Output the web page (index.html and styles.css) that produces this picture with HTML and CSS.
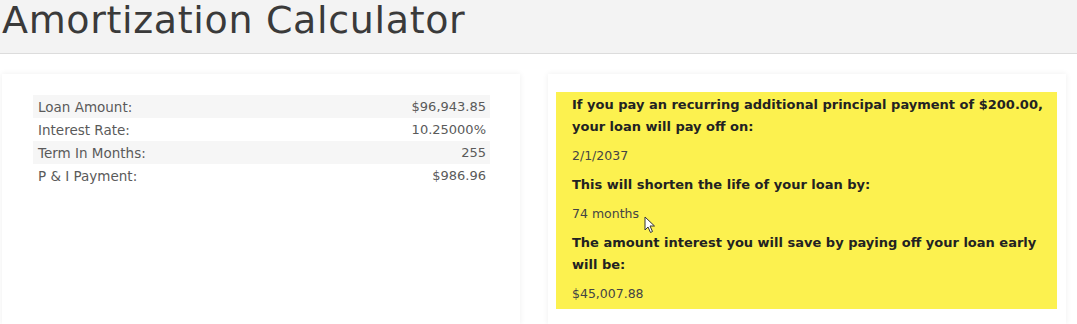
FILE: index.html
```html
<!DOCTYPE html>
<html lang="en">
<head>
    <meta charset="UTF-8">
    <meta name="viewport" content="width=device-width, initial-scale=1.0">
    <title>Amortization Calculator</title>
    <link rel="stylesheet" href="styles.css">
</head>
<body>

    <div class="header">
        <h1>Amortization Calculator</h1>
    </div>

    <div class="main">
        <div class="card">
            <div class="summary">
                <div class="row"><span>Loan Amount:</span><span class="num">$96,943.85</span></div>
                <div class="row"><span>Interest Rate:</span><span class="num">10.25000%</span></div>
                <div class="row"><span>Term In Months:</span><span class="num">255</span></div>
                <div class="row"><span>P &amp; I Payment:</span><span class="num">$986.96</span></div>
            </div>
        </div>

        <div class="card card-right">
            <div class="highlight">
                <p class="label">If you pay an recurring additional principal payment of $200.00, your loan will pay off on:</p>
                <p class="value">2/1/2037</p>
                <p class="label">This will shorten the life of your loan by:</p>
                <p class="value">74 months</p>
                <p class="label">The amount interest you will save by paying off your loan early will be:</p>
                <p class="value">$45,007.88</p>

                <!-- mouse pointer in the capture -->
                <svg class="pointer" width="12" height="18" viewBox="0 0 12 18">
                    <path d="M1 1 L1 14 L4 11 L6.5 16.5 L8.5 15.5 L6 10 L10.5 10 Z" fill="#fff" stroke="#333" stroke-width="1"/>
                </svg>
            </div>
        </div>
    </div>

</body>
</html>
```

FILE: styles.css
```css
body { margin: 0; padding: 0; background: #fff; font-family: "DejaVu Sans", "Liberation Sans", sans-serif; }

.header { height: 53px; background: #f3f3f3; border-bottom: 1px solid #dcdcdc; padding-left: 2px; }
.header h1 { margin: 0; font-size: 38px; font-weight: normal; color: #3a3a3a; line-height: 40px; letter-spacing: 0.65px; }

.main { display: grid; grid-template-columns: 518px 518px; gap: 28px; padding: 20px 11px 0 2px; }

.card { background: #fff; box-shadow: 0 0 6px rgba(0,0,0,0.07); height: 250px; box-sizing: border-box; }

.summary { padding: 21px 30px 0 31px; }
.row { display: flex; justify-content: space-between; align-items: center; height: 23px; padding: 0 4px 0 5px; font-size: 13.5px; color: #5a5a5a; }
.row .num { font-size: 13px; }
.row:nth-child(odd) { background: #f6f6f6; }

.card-right { padding: 18px 9px 0 8px; }
.highlight { position: relative; background: #fcf14f; padding: 2px 14px 4px 16px; }
.highlight p { margin: 0 0 7px; line-height: 22px; color: #222; }
.highlight p:last-of-type { margin-bottom: 0; }
.label { font-size: 13px; font-weight: bold; }
.value { font-size: 12.5px; color: #444 !important; }

.pointer { position: absolute; left: 88px; top: 124px; }
```
